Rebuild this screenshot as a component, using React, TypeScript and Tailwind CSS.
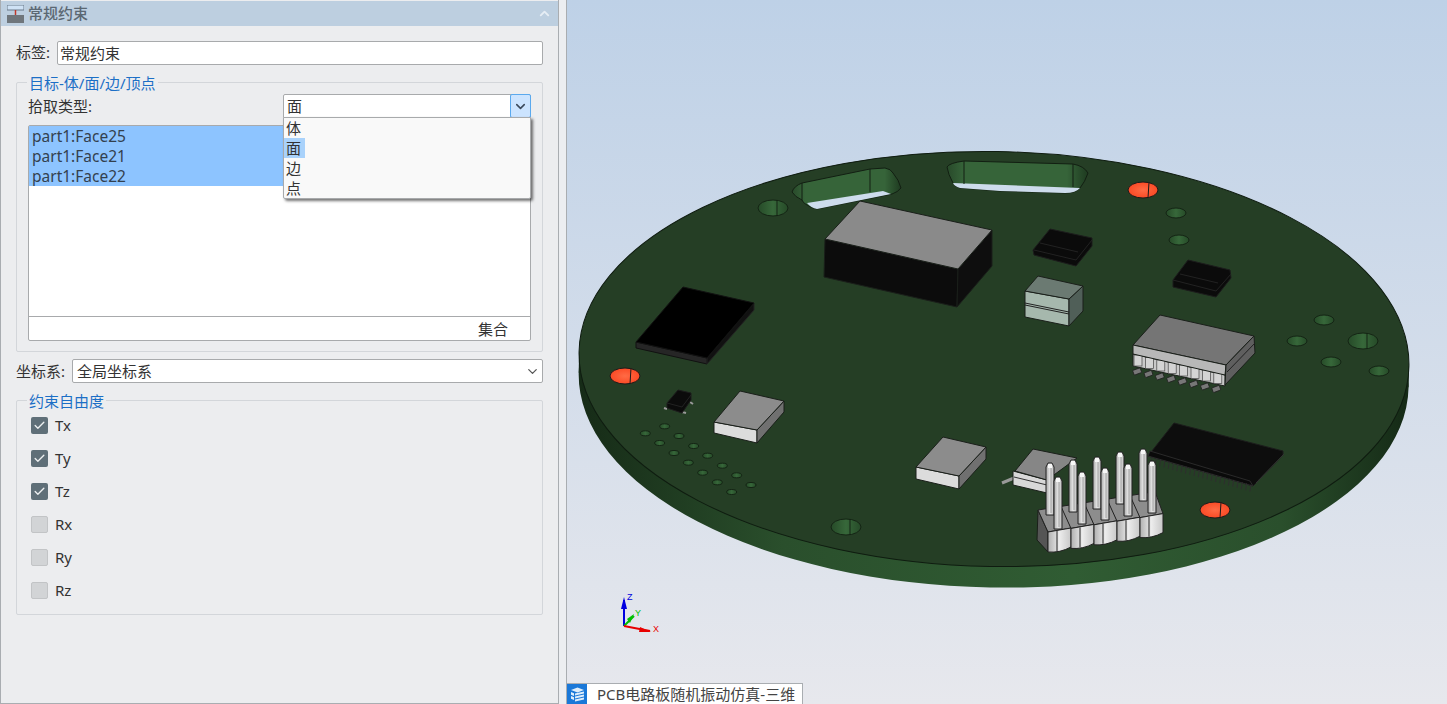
import React from 'react';
import { ChevronDown, ChevronUp, Check } from 'lucide-react';

const FONT = 'font-["Noto_Sans","Noto_Sans_CJK_SC",sans-serif]';

const Poly = ({ p, fill, stroke = '#1a1f1a' }: { p: string; fill: string; stroke?: string }) => (
  <polygon points={p} fill={fill} stroke={stroke} strokeWidth={1} strokeLinejoin="round" />
);

const Hole = ({ x, y, rx, ry, seam }: { x: number; y: number; rx: number; ry: number; seam?: boolean }) => (
  <g>
    <ellipse cx={x} cy={y} rx={rx} ry={ry} fill="url(#holeFill)" stroke="#142414" strokeWidth={1} />
    {seam && <line x1={x + 4} y1={y - ry} x2={x + 4} y2={y + ry} stroke="#142414" strokeWidth={1} />}
  </g>
);

const Pad = ({ x, y }: { x: number; y: number }) => (
  <g>
    <ellipse cx={x} cy={y} rx={15} ry={8} fill="url(#padFill)" stroke="#1a1a1a" strokeWidth={1} />
    <line x1={x + 6} y1={y - 8} x2={x + 5} y2={y + 8} stroke="#1a1a1a" strokeWidth={1} />
  </g>
);

const smallHoles = [
  [194, 439], [136, 460], [237, 468], [179, 489], [281, 498], [222, 519], [323, 527],
  [265, 548], [367, 557], [308, 578], [410, 586], [352, 607], [453, 615], [395, 636],
];

const mediumHoles = [
  [1324, 320], [1297, 341], [1331, 362], [1379, 371], [1176, 213], [1179, 240],
];

const BlackChip = ({ p, lines }: { p: string; lines: string[] }) => (
  <g>
    <Poly p={p} fill="#0b0b0b" stroke="#1c1c1c" />
    {lines.map((l) => (
      <polyline key={l} points={l} fill="none" stroke="#222" strokeWidth={1} />
    ))}
  </g>
);

const Soic = () => (
  <g>
    <Poly p="1133,354 1225,375 1225,386 1133,366" fill="#c9c9c9" />
    {Array.from({ length: 8 }).map((_, i) => (
      <g key={i}>
        <rect x={1134 + i * 11.4} y={355 + i * 2.5} width={8} height={11} fill="#d4d4d4" stroke="#444" strokeWidth={0.7} />
        <rect x={1133 + i * 11.3} y={369 + i * 2.5} width={8} height={5} rx={1} fill="#777" stroke="#222" strokeWidth={0.8} transform={`rotate(-20 ${1137 + i * 11.3} ${371 + i * 2.5})`} />
      </g>
    ))}
    <Poly p="1160,315 1254,336 1226,365 1133,345" fill="#757575" />
    <Poly p="1133,345 1226,365 1225,375 1133,354" fill="#b8b8b8" />
    <Poly p="1254,336 1255,353 1225,385 1226,365" fill="#5f5f5f" />
    <line x1="1227" y1="372" x2="1255" y2="343" stroke="#222" strokeWidth={1} />
  </g>
);

const WideChip = () => (
  <g>
    <Poly p="1148,456 1253,486 1283,455 1283,451 1174,423" fill="#0d0d0d" stroke="#1c1c1c" />
    <Poly p="1148,456 1253,486 1250,481 1150,451" fill="#0a0a0a" stroke="#2a2a2a" />
    {Array.from({ length: 24 }).map((_, i) => (
      <line key={i} x1={1152 + i * 4.3} y1={457 + i * 1.2} x2={1151 + i * 4.3} y2={464 + i * 1.2} stroke="#2e2e2e" strokeWidth={1} />
    ))}
    <polyline points="1256,483 1284,454" fill="none" stroke="#333" strokeWidth={1} />
  </g>
);

const pinBack = [
  [1050, 463], [1073, 460], [1097, 457], [1120, 452], [1143, 449],
];
const pinFront = [
  [1058, 477], [1082, 472], [1105, 468], [1128, 464], [1152, 461],
];

const Pin = ({ x, y }: { x: number; y: number }) => (
  <g>
    <path d={`M${x - 4} ${y + 52} V${y + 4} L${x - 2} ${y} H${x + 2} L${x + 4} ${y + 4} V${y + 52} Z`} fill="url(#pinFill)" stroke="#222" strokeWidth={1} />
    <rect x={x - 2} y={y + 1} width={4} height={4} fill="#f7f7f7" />
    <line x1={x + 1} y1={y + 5} x2={x + 1} y2={y + 50} stroke="#777" strokeWidth={0.6} />
  </g>
);

const Header = () => (
  <g>
    <Poly p="1038,510 1048,532 1048,552 1037,540" fill="#555" />
    {[0, 1, 2, 3, 4].map((i) => {
      const x = 1048 + i * 23;
      const y = -i * 3.6;
      return (
        <g key={i}>
          <polygon points={`${x - 10},${510 + y} ${x + 15},${506 + y} ${x + 23},${528 + y} ${x},${532 + y}`} fill="#8d8d8d" stroke="#222" strokeWidth={1} />
          <path d={`M${x} ${532 + y} L${x + 23} ${528 + y} V${547 + y} Q${x + 12} ${553 + y} ${x} ${552 + y} Z`} fill="url(#bodyFill)" stroke="#222" strokeWidth={1} />
          <line x1={x + 9} y1={531 + y} x2={x + 9} y2={551 + y} stroke="#222" strokeWidth={1} />
        </g>
      );
    })}
    {pinBack.map(([x, y]) => <Pin key={x} x={x} y={y} />)}
    {pinFront.map(([x, y]) => <Pin key={x} x={x} y={y} />)}
  </g>
);

const Board = () => (
  <svg className="absolute inset-0 w-full h-full" viewBox="567 0 880 704">
    <defs>
      <linearGradient id="rimFill" x1="0" x2="1" y1="0" y2="0">
        <stop offset="0" stopColor="#162b17" />
        <stop offset="0.25" stopColor="#2a4f2c" />
        <stop offset="0.6" stopColor="#305c33" />
        <stop offset="0.85" stopColor="#2a4f2c" />
        <stop offset="1" stopColor="#152a16" />
      </linearGradient>
      <linearGradient id="holeFill" x1="0" x2="1" y1="0" y2="0">
        <stop offset="0" stopColor="#264a28" />
        <stop offset="0.5" stopColor="#37683a" />
        <stop offset="1" stopColor="#264a28" />
      </linearGradient>
      <linearGradient id="slotFill" x1="0" x2="1" y1="0" y2="0">
        <stop offset="0" stopColor="#28492a" />
        <stop offset="0.12" stopColor="#366439" />
        <stop offset="0.85" stopColor="#366439" />
        <stop offset="1" stopColor="#1e3a20" />
      </linearGradient>
      <radialGradient id="padFill">
        <stop offset="0" stopColor="#ff6b45" />
        <stop offset="1" stopColor="#fb4a25" />
      </radialGradient>
      <linearGradient id="pinFill" x1="0" x2="1" y1="0" y2="0">
        <stop offset="0" stopColor="#a8a8a8" />
        <stop offset="0.5" stopColor="#e6e6e6" />
        <stop offset="1" stopColor="#bdbdbd" />
      </linearGradient>
      <linearGradient id="bodyFill" x1="0" x2="1" y1="0" y2="0">
        <stop offset="0" stopColor="#b0b0b0" />
        <stop offset="0.5" stopColor="#ececec" />
        <stop offset="1" stopColor="#c8c8c8" />
      </linearGradient>
    </defs>

    {/* board edge */}
    <g transform="rotate(1 994 359)">
      <rect x="579" y="359" width="830" height="21" fill="url(#rimFill)" />
      <ellipse cx="994" cy="380" rx="415" ry="207.5" fill="url(#rimFill)" />
      <ellipse cx="994" cy="359" rx="415" ry="207.5" fill="#253e25" stroke="#0f1c10" strokeWidth={1} />
    </g>

    {/* slots */}
    <path d="M792 192 Q794 186 802 183 L870 169 L885 168 Q891 169 893 173 Q899 180 901 188 Q898 192 892 194 L817 209 Q811 208 807 205 Q803 203 802 200 Q795 197 792 192 Z" fill="url(#slotFill)" stroke="#121f12" />
    <path d="M807 203 L883 191 L891 194 L817 209 Q811 208 807 203 Z" fill="#cddcec" />
    <line x1="802" y1="183" x2="802" y2="200" stroke="#121f12" />
    <line x1="870" y1="169" x2="870" y2="192" stroke="#121f12" />
    <path d="M947 167 Q949 163 964 161 L1073 164 Q1084 166 1088 173 Q1085 182 1080 188 Q1076 193 1065 193 L1000 191 L960 188 Q954 186 953 183 Q948 174 947 167 Z" fill="url(#slotFill)" stroke="#121f12" />
    <path d="M953 183 L1080 188 Q1076 193 1065 193 L1000 191 L960 188 Q954 186 953 183 Z" fill="#cddcec" />
    <line x1="964" y1="161" x2="964" y2="184" stroke="#121f12" />
    <line x1="1073" y1="164" x2="1073" y2="187" stroke="#121f12" />

    {/* holes */}
    <Hole x={773} y={208} rx={15} ry={8} seam />
    <Hole x={1363} y={341} rx={15} ry={8} seam />
    <Hole x={846} y={527} rx={15} ry={8} seam />
    {mediumHoles.map(([x, y]) => <Hole key={x} x={x} y={y} rx={10} ry={5} />)}
    {smallHoles.map(([x, y]) => <Hole key={x} x={600 + x / 3} y={280 + y / 3} rx={5} ry={2.5} />)}

    <Pad x={1143} y={190} />
    <Pad x={625} y={376} />
    <Pad x={1215} y={510} />

    {/* big relay */}
    <Poly p="825,239 958,269 957,307 824,277" fill="#0c0c0c" />
    <Poly p="958,269 992,230 992,266 957,307" fill="#0e0e0e" />
    <Poly p="860,201 992,230 958,269 825,239" fill="#8a8a8a" />

    <BlackChip
      p="1050,229 1092,238 1092,246 1076,266 1034,255 1033,250"
      lines={['1034,250 1076,260 1092,240', '1040,243 1078,252']}
    />
    <BlackChip
      p="1188,260 1230,270 1231,278 1216,297 1173,287 1173,280"
      lines={['1173,280 1216,291 1231,274', '1180,274 1218,283']}
    />

    {/* green-grey block */}
    <Poly p="1025,291 1069,299 1069,326 1025,317" fill="#a6b8ad" />
    <Poly p="1069,299 1083,286 1083,311 1069,326" fill="#505f58" />
    <Poly p="1038,276 1083,286 1069,299 1025,291" fill="#6b7a72" />
    <line x1="1025" y1="303" x2="1069" y2="312" stroke="#222" strokeWidth={1} />
    <line x1="1025" y1="305" x2="1069" y2="314" stroke="#222" strokeWidth={1} />

    <Soic />

    {/* flat black part */}
    <Poly p="636,342 707,358 707,364 636,348" fill="#262626" stroke="#111" />
    <Poly p="707,358 754,303 754,310 707,364" fill="#111" stroke="#222" />
    <Poly p="683,287 754,303 707,358 636,342" fill="#000" stroke="#111" />

    {/* sot */}
    <line x1="667" y1="409" x2="664" y2="408" stroke="#999" strokeWidth={2} />
    <line x1="682" y1="412" x2="686" y2="413" stroke="#999" strokeWidth={2} />
    <line x1="690" y1="402" x2="693" y2="404" stroke="#999" strokeWidth={2} />
    <BlackChip p="678,390 691,393 691,400 682,413 667,408 667,403" lines={['667,403 682,407 691,395']} />

    {/* grey boxes */}
    <Poly p="714,422 757,430 757,443 714,433" fill="#dcdcdc" />
    <Poly p="757,430 784,401 784,412 757,443" fill="#707070" />
    <Poly p="740,391 784,401 757,430 714,422" fill="#8c8c8c" />

    <Poly p="916,467 959,476 959,489 916,479" fill="#dcdcdc" />
    <Poly p="959,476 986,447 986,459 959,489" fill="#707070" />
    <Poly p="943,437 986,447 959,476 916,467" fill="#8c8c8c" />

    <WideChip />

    {/* part behind the header */}
    <line x1="1002" y1="483" x2="1014" y2="478" stroke="#999" strokeWidth={3} />
    <Poly p="1013,471 1047,480 1047,493 1013,485" fill="#d8d8d8" />
    <line x1="1014" y1="477" x2="1047" y2="485" stroke="#333" strokeWidth={1} />
    <Poly p="1033,449 1077,458 1047,480 1015,471" fill="#868686" />

    <Header />

    {/* triad */}
    <g strokeWidth={2}>
      <line x1="624" y1="626" x2="624" y2="600" stroke="#0000e0" />
      <polygon points="624,597 621,609 627,609" fill="#0000e0" />
      <line x1="624" y1="626" x2="634" y2="616" stroke="#00c000" />
      <polygon points="634,614 627,619 630,623" fill="#00c000" />
      <line x1="624" y1="626" x2="650" y2="631" stroke="#e80000" />
      <polygon points="651,632 640,627 639,632" fill="#e80000" />
    </g>
    <text x="627" y="600" fontSize="9" fill="#0000e0" fontFamily="Liberation Sans">Z</text>
    <text x="635" y="616" fontSize="9" fill="#00c000" fontFamily="Liberation Sans">Y</text>
    <text x="653" y="632" fontSize="9" fill="#e80000" fontFamily="Liberation Sans">X</text>
  </svg>
);

const GroupBox = ({ title, className, children }: { title: string; className: string; children: React.ReactNode }) => (
  <div className={`relative border border-[#d3d6da] rounded-[2px] ${className}`}>
    <span className="absolute left-[10px] -top-[9px] px-[2px] bg-[#ecedef] text-[#1c6fc6] text-[15px] leading-[18px]">{title}</span>
    {children}
  </div>
);

const Dof = ({ label, checked }: { label: string; checked: boolean }) => (
  <div className="flex items-center h-[17px] gap-[7px]">
    <span className={`w-[17px] h-[17px] rounded-[2px] flex items-center justify-center ${checked ? 'bg-[#5f6f78]' : 'bg-[#d2d4d6] border border-[#c2c4c6]'}`}>
      {checked && <Check size={13} strokeWidth={2.5} className="text-[#eceff0]" />}
    </span>
    <span className="text-[15px] text-[#333]">{label}</span>
  </div>
);

const App = () => {
  return (
    <div className={`${FONT} flex w-[1447px] h-[704px] overflow-hidden bg-[#eceef1] text-[#333]`}>
      {/* left panel */}
      <div className="w-[559px] h-full shrink-0 flex flex-col border-l border-r border-[#a9adb1] border-b bg-[#ecedef]">
        <div className="mt-px h-[25px] shrink-0 bg-[#bdcfe0] flex items-center pl-[6px] pr-[3px]">
          <svg width="17" height="18" viewBox="0 0 17 18">
            <rect x="0" y="0" width="17" height="5" fill="#cfe2f5" stroke="#6b7b8a" />
            <line x1="8.5" y1="5" x2="8.5" y2="10" stroke="#c0392b" strokeWidth="1.5" />
            <rect x="0" y="10" width="17" height="8" fill="#6f767c" />
          </svg>
          <span className="ml-[4px] text-[15px] font-medium text-[#5b6873]">常规约束</span>
          <ChevronUp size={15} strokeWidth={3} className="ml-auto mr-[3px] text-[#e6edf4]" />
        </div>

        <div className="flex items-center mt-[15px] ml-[15px] mr-[15px] h-[23px]">
          <span className="w-[41px] text-[15px]">标签:</span>
          <div className="flex-1 h-[24px] bg-white border border-[#a8aaac] rounded-[2px] pl-[2px] text-[15px] leading-[22px]">常规约束</div>
        </div>

        <GroupBox title="目标-体/面/边/顶点" className="mt-[18px] ml-[15px] mr-[15px] h-[270px] px-[11px] pt-[11px]">
          <div className="flex items-center justify-between h-[24px]">
            <span className="text-[15px]">拾取类型:</span>
            <div className="relative w-[248px] h-[24px] bg-white border border-[#a8aaac] rounded-t-[2px] text-[15px] leading-[22px] pl-[3px]">
              面
              <span className="absolute -right-px -top-px w-[21px] h-[24px] bg-[#cce4ff] border border-[#5aa9ee] rounded-[2px] flex items-center justify-center">
                <ChevronDown size={15} strokeWidth={2.5} className="text-[#3c4a5c]" />
              </span>
              {/* open dropdown */}
              <div className="absolute z-10 -left-px top-[22px] w-[248px] h-[82px] bg-[#f9f9f9] border border-[#a8aaac] rounded-b-[2px] shadow-[2px_2px_3px_rgba(0,0,0,0.55)] flex flex-col">
                <span className="h-[20px] pl-[2px] leading-[20px]">体</span>
                <span className="h-[20px] w-[21px] pl-[2px] leading-[20px] bg-[#a9d2fb]">面</span>
                <span className="h-[20px] pl-[2px] leading-[20px]">边</span>
                <span className="h-[20px] pl-[2px] leading-[20px]">点</span>
              </div>
            </div>
          </div>

          <div className="mt-[7px] h-[216px] bg-white border border-[#a8aaac] rounded-[2px] flex flex-col">
            <div className="flex-1">
              {['part1:Face25', 'part1:Face21', 'part1:Face22'].map((f) => (
                <div key={f} className="h-[20px] bg-[#8dc4ff] pl-[3px] text-[15.5px] leading-[20px] text-[#33404e]">{f}</div>
              ))}
            </div>
            <div className="h-[24px] border-t border-[#a8aaac] text-[15px] leading-[24px] text-right pr-[22px]">集合</div>
          </div>
        </GroupBox>

        <div className="flex items-center mt-[7px] ml-[15px] mr-[15px] h-[24px]">
          <span className="w-[56px] text-[15px]">坐标系:</span>
          <div className="flex-1 h-[24px] bg-white border border-[#a8aaac] rounded-[2px] pl-[4px] pr-[2px] text-[15px] leading-[22px] flex items-center justify-between">
            全局坐标系
            <ChevronDown size={15} strokeWidth={2} className="text-[#555]" />
          </div>
        </div>

        <GroupBox title="约束自由度" className="mt-[17px] ml-[15px] mr-[15px] h-[215px] pl-[14px] pt-[16px] flex flex-col gap-[16px]">
          <Dof label="Tx" checked />
          <Dof label="Ty" checked />
          <Dof label="Tz" checked />
          <Dof label="Rx" checked={false} />
          <Dof label="Ry" checked={false} />
          <Dof label="Rz" checked={false} />
        </GroupBox>
      </div>

      {/* splitter */}
      <div className="w-[8px] h-full shrink-0 bg-[#eceef1] border-r border-[#a9adb1]" />

      {/* 3D view */}
      <div className="relative flex-1 h-full bg-gradient-to-b from-[#bed1e7] to-[#e7e8ed]">
        <Board />
        <div className="absolute left-0 bottom-0 h-[21px] w-[236px] bg-white border-t border-r border-[#a9adb1] flex items-center">
          <span className="w-[20px] h-[20px] bg-[#1a78d8] flex items-center justify-center">
            <svg width="15" height="15" viewBox="0 0 15 15" fill="#dfeefb">
              <path d="M7.5 0.5 L14 3 L7.5 5.5 L1 3 Z" />
              <path d="M1 5 L4 6.2 V9 L1 7.8 Z" />
              <path d="M1 9 L4 10.2 V13 L1 11.8 Z" />
              <path d="M5 6.6 L14 4.5 V6.5 L5 8.6 Z" />
              <path d="M5 9.6 L14 7.5 V9.5 L5 11.6 Z" />
              <path d="M5 12.6 L14 10.5 V12.5 L5 14.6 Z" />
            </svg>
          </span>
          <span className="ml-[10px] text-[15px] text-[#444] whitespace-nowrap">PCB电路板随机振动仿真-三维</span>
        </div>
      </div>
    </div>
  );
};

export default App;
